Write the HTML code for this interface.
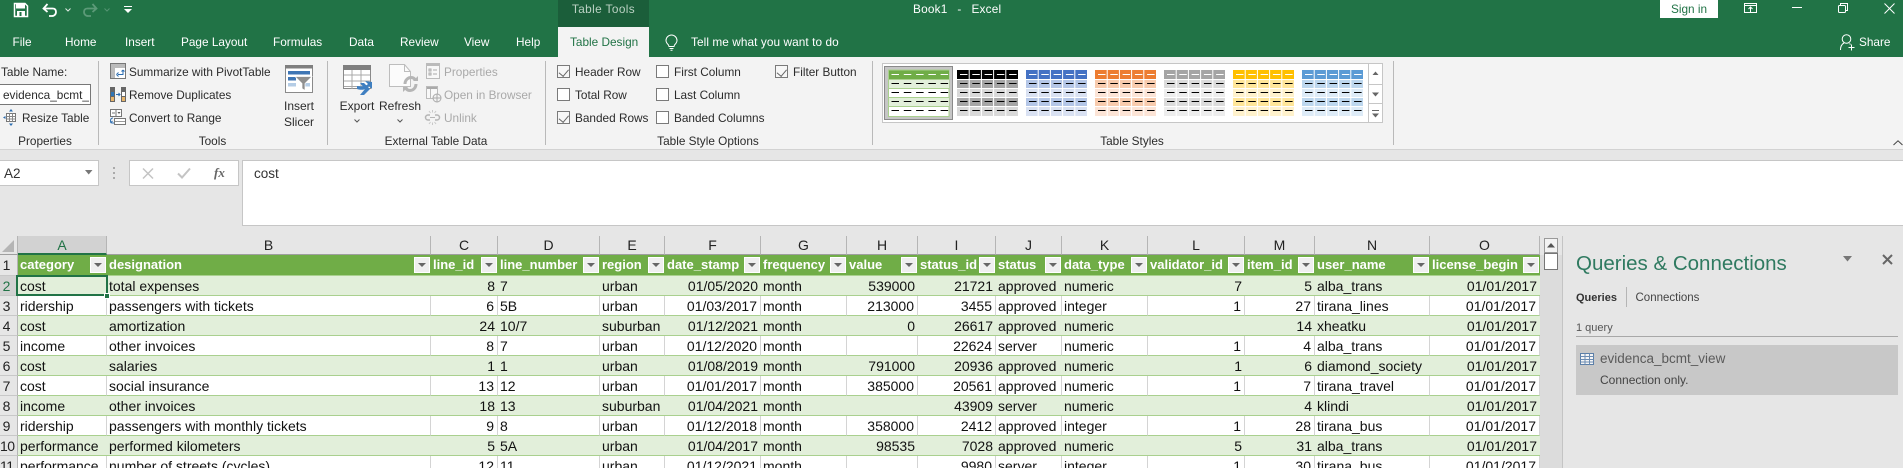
<!DOCTYPE html>
<html><head><meta charset="utf-8"><title>Book1 - Excel</title>
<style>
*{box-sizing:border-box}
html,body{margin:0;padding:0;width:1903px;height:468px;overflow:hidden;background:#e6e6e6;font-family:"Liberation Sans",sans-serif}
#r{position:relative;width:1903px;height:468px;overflow:hidden}
.a{position:absolute}
.t{position:absolute;white-space:nowrap;font-size:11.8px;line-height:14px;color:#2b2b2b}
.w{color:#fff}
.d{color:#a9a9a9}
.c{text-align:center}
svg{position:absolute;overflow:visible}
.sep{position:absolute;top:61px;width:1px;height:84px;background:#b9b9b9}
.cb{position:absolute;width:13px;height:13px;background:#fff;border:1px solid #7a7a7a}
.cb.k{background:#f7f7f7}
.cb.k:after{content:"";position:absolute;left:2.5px;top:1px;width:4.5px;height:7.5px;border:solid #666;border-width:0 1px 1px 0;transform:rotate(40deg)}
table{position:absolute;left:18px;top:255px;border-collapse:separate;border-spacing:0;table-layout:fixed;width:1522px;font-size:14px;color:#111}
td{padding:0 2px;height:20px;line-height:18px;white-space:nowrap;overflow:hidden;background:#fff;border-bottom:1px solid #a9d08e;border-right:1px solid #d4d4d4}
tr.b td{background:#e2efda;border-right:0}
td.r{text-align:right;padding-right:3px}
tr.h td{background:#70ad47;color:#fff;font-weight:bold;font-size:13px;height:21px;line-height:20px;border-right:0;position:relative}
tr.h td i{position:absolute;right:1.5px;top:2px;width:16px;height:16px;background:#efefef;border:1px solid #fff}
tr.h td i:after{content:"";position:absolute;left:3.5px;top:5px;border:4px solid transparent;border-top:4px solid #666;border-bottom:0}
.ch{position:absolute;top:236px;height:19px;background:#e6e6e6;border-right:1px solid #b5b5b5;border-bottom:1px solid #9e9e9e;text-align:center;font-size:14px;line-height:18px;color:#222}
.rh{position:absolute;left:0;width:18px;height:20px;border-right:1px solid #b5b5b5;border-bottom:1px solid #c8c8c8;font-size:14px;line-height:20px;color:#222;text-align:center;background:#e6e6e6;padding-right:4px}
</style></head><body><div id="r">

<!-- title bar -->
<div class="a" style="left:0;top:0;width:1903px;height:57px;background:#217346"></div>
<div class="a" style="left:558px;top:0;width:91px;height:27px;background:#1b5e3a"></div>
<div class="a" style="left:558px;top:27px;width:91px;height:30px;background:#f3f3f3"></div>
<svg style="left:13px;top:3px" width="16" height="14" viewBox="0 0 16 14"><path d="M1.5 .5h10.5l2.5 2.5v10.500h-13z" fill="none" stroke="#fff" stroke-width="1.500"/><rect x="3" y="1" width="9" height="4.500" fill="#fff"/><rect x="4" y="8" width="8" height="5" fill="#fff"/><rect x="6.500" y="9" width="2" height="4" fill="#217346"/></svg>
<svg style="left:42px;top:3px" width="16" height="14" viewBox="0 0 16 14"><path d="M2 5.500h8.500c2.500 0 3.500 1.500 3.500 3.500s-1.500 4-4 4H7M5.500 1 1.500 5.500 5.500 9" fill="none" stroke="#fff" stroke-width="1.800"/></svg>
<svg style="left:65px;top:8px" width="6" height="4" viewBox="0 0 6 4"><path d="M.5.500 3 3 5.500.5" fill="none" stroke="#dfe9e3" stroke-width="1"/></svg>
<svg style="left:82px;top:3px" width="16" height="14" viewBox="0 0 16 14"><path d="M14 5.500H5.500C3 5.500 2 7 2 9s1.500 4 4 4h3M10.500 1l4 4.500-4 3.500" fill="none" stroke="#5c9a78" stroke-width="1.800"/></svg>
<svg style="left:104px;top:8px" width="6" height="4" viewBox="0 0 6 4"><path d="M.5.500 3 3 5.500.5" fill="none" stroke="#559573" stroke-width="1"/></svg>
<svg style="left:124px;top:6px" width="8" height="8" viewBox="0 0 8 8"><path d="M0 .5h8" stroke="#fff"/><path d="M0 3h8L4 7z" fill="#fff"/></svg>

<div class="t c" style="left:558px;top:2px;width:91px;color:#bcd2c4;letter-spacing:.4px">Table Tools</div>
<div class="t w" style="left:913px;top:2px;letter-spacing:.2px;word-spacing:1.500px">Book1 &nbsp;-&nbsp; Excel</div>

<div class="a" style="left:1660px;top:0;width:58px;height:18px;background:#fff"></div>
<div class="t c" style="left:1660px;top:2px;width:58px;color:#217346">Sign in</div>
<svg style="left:1744px;top:3px" width="13" height="10" viewBox="0 0 13 10"><rect x=".5" y=".5" width="12" height="9" fill="none" stroke="#fff"/><path d="M.5 2.500h12" stroke="#fff"/><path d="M6.500 9V4.500M4.500 6l2-2 2 2" fill="none" stroke="#fff"/></svg>
<div class="a" style="left:1792px;top:7px;width:10px;height:1px;background:#fff"></div>
<svg style="left:1838px;top:3px" width="10" height="10" viewBox="0 0 10 10"><rect x=".5" y="2.500" width="7" height="7" rx="1" fill="none" stroke="#fff"/><path d="M2.500 2.500V.5h7v7H7.500" fill="none" stroke="#fff"/></svg>
<svg style="left:1884px;top:3px" width="11" height="11" viewBox="0 0 11 11"><path d="M.5.500 10.500 10.500M10.500.5.500 10.500" stroke="#fff"/></svg>

<div class="t w" style="left:12.500px;top:35px">File</div>
<div class="t w" style="left:65px;top:35px">Home</div>
<div class="t w" style="left:125px;top:35px">Insert</div>
<div class="t w" style="left:181px;top:35px">Page Layout</div>
<div class="t w" style="left:273px;top:35px">Formulas</div>
<div class="t w" style="left:349px;top:35px">Data</div>
<div class="t w" style="left:400px;top:35px">Review</div>
<div class="t w" style="left:464px;top:35px">View</div>
<div class="t w" style="left:516px;top:35px">Help</div>
<div class="t" style="left:570px;top:35px;color:#217346">Table Design</div>
<svg style="left:665px;top:34px" width="13" height="17" viewBox="0 0 13 17"><path d="M3.500 11C2 9.500 1 8.500 1 6.500a5.500 5.500 0 0 1 11 0c0 2-1 3-2.500 4.500L9 12.500H4zM4.500 14.500h4M5.500 16.300h2" fill="none" stroke="#fff"/></svg>
<div class="t w" style="left:691px;top:35px;letter-spacing:.08px">Tell me what you want to do</div>
<svg style="left:1840px;top:34px" width="15" height="17" viewBox="0 0 15 17"><circle cx="6.500" cy="5" r="4.300" fill="none" stroke="#fff"/><path d="M.5 16c0-3.500 1.500-6 3.500-7M9.500 9.500l1 1M8.500 13.500h6M11.500 10.500v6" fill="none" stroke="#fff"/></svg>
<div class="t w" style="left:1859px;top:35px">Share</div>

<!-- ribbon -->
<div class="a" style="left:0;top:57px;width:1903px;height:92px;background:#f3f3f3"></div>
<div class="a" style="left:0;top:149px;width:1903px;height:1px;background:#d2d2d2"></div>
<div class="sep" style="left:98px"></div>
<div class="sep" style="left:327px"></div>
<div class="sep" style="left:545px"></div>
<div class="sep" style="left:872px"></div>
<div class="sep" style="left:1393px"></div>
<svg style="left:1893px;top:140px" width="10" height="6" viewBox="0 0 10 6"><path d="M.5 5 5 .8 9.500 5" fill="none" stroke="#444"/></svg>

<div class="t" style="left:1px;top:65px">Table Name:</div>
<div class="a" style="left:0;top:84px;width:91px;height:21px;background:#fff;border:1px solid #777;border-left:0"></div>
<div class="t" style="left:3px;top:88px;width:86px;overflow:hidden">evidenca_bcmt_view</div>
<svg style="left:3px;top:109px" width="15" height="17" viewBox="0 0 15 17"><rect x="3.500" y="4.500" width="9" height="8" fill="#fff" stroke="#777"/><path d="M3.500 7.500h9M3.500 10h9M6.500 4.500v8M9.500 4.500v8" stroke="#888"/><path d="M8 0 6 2.500h4zM8 17l-2-2.500h4zM0 8.500 2.500 7v3z" fill="#2b6cb0"/></svg>
<div class="t" style="left:22px;top:111px">Resize Table</div>
<div class="t c" style="left:0;top:134px;width:90px">Properties</div>

<svg style="left:110px;top:63px" width="16" height="16" viewBox="0 0 16 16"><rect x=".5" y=".5" width="15" height="15" fill="#fff" stroke="#777"/><path d="M1 5h4v10H1zM1 1h4v4H1zM5 1h10v4H5z" fill="#bbb"/><path d="M8 11.500h5V7.500M6.500 11.500l2-2M6.500 11.500l2 2M13 7l-1.500 1.500M13 7l1.500 1.500" fill="none" stroke="#2b6cb0"/></svg>
<div class="t" style="left:129px;top:65px">Summarize with PivotTable</div>
<svg style="left:110px;top:87px" width="16" height="15" viewBox="0 0 16 15"><rect x="0" y="0" width="5" height="15" fill="#666"/><rect x="11" y="0" width="5" height="15" fill="#666"/><rect x="1" y="5" width="3" height="4" fill="#2f75b5"/><rect x="1" y="10" width="3" height="4" fill="#e7b56b"/><rect x="12" y="5" width="3" height="4" fill="#fff"/><rect x="12" y="10" width="3" height="4" fill="#e7b56b"/><path d="M6 7.500h4M8.500 6l1.500 1.500-1.500 1.500" fill="none" stroke="#2b6cb0"/></svg>
<div class="t" style="left:129px;top:88px">Remove Duplicates</div>
<svg style="left:110px;top:109px" width="16" height="17" viewBox="0 0 16 17"><rect x=".5" y=".5" width="11" height="7" fill="#fff" stroke="#777"/><path d="M6 1v6" stroke="#777"/><path d="M2 4h3" stroke="#777"/><path d="M7.500 3h3l-1.500 2z" fill="#555"/><rect x="4.500" y="9.500" width="11" height="6" fill="#fff" stroke="#777"/><path d="M5 12.500h10" stroke="#999"/><path d="M3 9C1 9 .5 10.500.5 12s1 2 2 2H4M2.500 12l-2 2" fill="none" stroke="#2b6cb0"/></svg>
<div class="t" style="left:129px;top:111px">Convert to Range</div>
<svg style="left:285px;top:65px" width="28" height="28" viewBox="0 0 28 28"><rect x=".5" y=".5" width="27" height="27" fill="#fff" stroke="#8a8a8a"/><rect x="0" y="0" width="28" height="3.500" fill="#7f7f7f"/><rect x="3" y="6" width="22" height="3.500" fill="#3f76b5"/><rect x="3" y="12" width="8" height="3.500" fill="#3f76b5"/><rect x="3" y="18" width="8" height="3.500" fill="#b5cde6"/><rect x="18" y="18" width="7" height="3.500" fill="#b5cde6"/><path d="M10 11.500h17l-7 7v7l-3-2v-5z" fill="#8f8f8f" stroke="#fff" stroke-width=".7"/></svg>
<div class="t c" style="left:279px;top:99px;width:40px;font-size:12px">Insert</div>
<div class="t c" style="left:279px;top:115px;width:40px;font-size:12px">Slicer</div>
<div class="t c" style="left:180px;top:134px;width:65px">Tools</div>

<svg style="left:343px;top:65px" width="30" height="31" viewBox="0 0 30 31"><rect x=".5" y=".5" width="27" height="23" fill="#fff" stroke="#8a8a8a"/><rect x="0" y="0" width="28" height="5" fill="#7f7f7f"/><path d="M1 10h26M1 16h26M1 21.500h26M9 5v19M18 5v19" stroke="#a8a8a8"/><path d="M14 21c6 1 9 0 11-2l-3-3 7 1v0l0 7-3-3c-2 3-6 5-12 3z" fill="#3f7fc1"/><path d="M17 18h4l6 6-6 6h-4l5-6z" fill="#3f7fc1"/></svg>
<svg style="left:389px;top:64px" width="30" height="32" viewBox="0 0 30 32"><path d="M.5.500h15l6 7v15h-21z" fill="#fbfbfb" stroke="#bdbdbd"/><path d="M15.500.5v7h6" fill="none" stroke="#bdbdbd"/><path d="M16 20c0-4 3-6.500 6-6.500 2 0 3 .5 4 2M27 20c0 4-3 6.500-6 6.500-2 0-3-.5-4-2" fill="none" stroke="#b5b5b5" stroke-width="3"/><path d="M24 17h5v-5zM19 23h-5v5z" fill="#b5b5b5"/></svg>
<div class="t c" style="left:337px;top:99px;width:40px;font-size:12px">Export</div>
<div class="t c" style="left:379px;top:99px;width:40px;font-size:12px">Refresh</div>
<svg style="left:354px;top:119px" width="6" height="4" viewBox="0 0 6 4"><path d="M.5.500 3 3 5.500.5" fill="none" stroke="#555"/></svg>
<svg style="left:397px;top:119px" width="6" height="4" viewBox="0 0 6 4"><path d="M.5.500 3 3 5.500.5" fill="none" stroke="#555"/></svg>

<svg style="left:426px;top:63px" width="14" height="16" viewBox="0 0 14 16"><rect x=".5" y=".5" width="13" height="15" fill="#f8f8f8" stroke="#bbb"/><path d="M1 2h12" stroke="#bbb" stroke-width="2"/><path d="M3 6h2v2H3zM3 10h2v2H3zM7 7h4M7 11h4" fill="none" stroke="#aaa"/></svg>
<div class="t d" style="left:444px;top:65px">Properties</div>
<svg style="left:426px;top:86px" width="16" height="17" viewBox="0 0 16 17"><rect x=".5" y=".5" width="11" height="12" fill="#f8f8f8" stroke="#bbb"/><path d="M1 2h10" stroke="#aaa" stroke-width="2"/><path d="M4.500 3v9" stroke="#bbb"/><circle cx="11" cy="12" r="4" fill="#f3f3f3" stroke="#aaa"/><path d="M7 12h8M11 8v8" stroke="#aaa"/></svg>
<div class="t d" style="left:444px;top:88px">Open in Browser</div>
<svg style="left:425px;top:110px" width="15" height="15" viewBox="0 0 15 15"><path d="M5 5H3a2.500 2.500 0 0 0 0 5h2M10 5h2a2.500 2.500 0 0 1 0 5h-2" fill="none" stroke="#b5b5b5" stroke-width="1.500"/><path d="M5 7.500h5" stroke="#b5b5b5"/><path d="M4 1l1.500 2M7.500 0v2.500M11 1 9.500 3M4 14l1.500-2M7.500 15v-2.500M11 14l-1.500-2" stroke="#c8c8c8"/></svg>
<div class="t d" style="left:444px;top:111px">Unlink</div>
<div class="t c" style="left:330px;top:134px;width:212px">External Table Data</div>

<div class="cb k" style="left:557px;top:65px"></div><div class="t" style="left:575px;top:65px">Header Row</div>
<div class="cb" style="left:557px;top:88px"></div><div class="t" style="left:575px;top:88px">Total Row</div>
<div class="cb k" style="left:557px;top:111px"></div><div class="t" style="left:575px;top:111px">Banded Rows</div>
<div class="cb" style="left:656px;top:65px"></div><div class="t" style="left:674px;top:65px">First Column</div>
<div class="cb" style="left:656px;top:88px"></div><div class="t" style="left:674px;top:88px">Last Column</div>
<div class="cb" style="left:656px;top:111px"></div><div class="t" style="left:674px;top:111px">Banded Columns</div>
<div class="cb k" style="left:775px;top:65px"></div><div class="t" style="left:793px;top:65px">Filter Button</div>
<div class="t c" style="left:650px;top:134px;width:116px">Table Style Options</div>

<!-- gallery -->
<div class="a" style="left:882px;top:63px;width:501px;height:60px;background:#fff;border:1px solid #c6c6c6"></div>
<div class="a" style="left:884px;top:66px;width:69px;height:54px;background:#c6c6c6;border:1.500px solid #8a8a8a"></div>
<svg style="left:0;top:0" width="1903" height="468">
<defs>
<g id="ov"><path d="M12.200 0v46M24.400 0v46M36.600 0v46M48.800 0v46" stroke="#fff" stroke-width="1"/><path d="M0 9.500h61M0 18.500h61M0 27.500h61M0 36.500h61" stroke="#fff"/>
<path d="M3 13.500h7.500M15.300 13.500h7.500M27.600 13.500h7.500M39.900 13.500h7.500M52.100 13.500h7.500M3 22.500h7.500M15.300 22.500h7.500M27.600 22.500h7.500M39.900 22.500h7.500M52.100 22.500h7.500M3 31.500h7.500M15.300 31.500h7.500M27.600 31.500h7.500M39.900 31.500h7.500M52.100 31.500h7.500M3 40.500h7.500M15.300 40.500h7.500M27.600 40.500h7.500M39.900 40.500h7.500M52.100 40.500h7.500" stroke="#000"/>
<path d="M3 4.500h7.500M15.300 4.500h7.500M27.600 4.500h7.500M39.900 4.500h7.500M52.100 4.500h7.500" stroke="#fff"/></g>
</defs>
<!-- first thumb -->
<g transform="translate(888.500 70)"><rect width="60.500" height="46.500" fill="#fff" stroke="#a9d08e"/><rect x=".5" y=".5" width="60" height="9" fill="#70ad47"/><rect x=".5" y="10" width="60" height="8.500" fill="#e2efda"/><rect x=".5" y="28" width="60" height="8.500" fill="#e2efda"/><path d="M0 9.500h61M0 18.500h61M0 27.500h61M0 36.500h61" stroke="#a9d08e"/>
<path d="M3 4.500h7.500M15.300 4.500h7.500M27.600 4.500h7.500M39.900 4.500h7.500M52.100 4.500h7.500" stroke="#fff"/><path d="M3 13.500h7.500M15.300 13.500h7.500M27.600 13.500h7.500M39.900 13.500h7.500M52.100 13.500h7.500M3 22.500h7.500M15.300 22.500h7.500M27.600 22.500h7.500M39.900 22.500h7.500M52.100 22.500h7.500M3 31.500h7.500M15.300 31.500h7.500M27.600 31.500h7.500M39.900 31.500h7.500M52.100 31.500h7.500M3 40.500h7.500M15.300 40.500h7.500M27.600 40.500h7.500M39.900 40.500h7.500M52.100 40.500h7.500" stroke="#000"/></g>
<g transform="translate(957 70)"><rect width="61" height="9.500" fill="#000"/><rect y="9.500" width="61" height="9" fill="#a6a6a6"/><rect y="18.500" width="61" height="9" fill="#d9d9d9"/><rect y="27.500" width="61" height="9" fill="#a6a6a6"/><rect y="36.500" width="61" height="9.500" fill="#d9d9d9"/><use href="#ov"/></g>
<g transform="translate(1026 70)"><rect width="61" height="9.500" fill="#4472c4"/><rect y="9.500" width="61" height="9" fill="#b4c6e7"/><rect y="18.500" width="61" height="9" fill="#d9e1f2"/><rect y="27.500" width="61" height="9" fill="#b4c6e7"/><rect y="36.500" width="61" height="9.500" fill="#d9e1f2"/><use href="#ov"/></g>
<g transform="translate(1095 70)"><rect width="61" height="9.500" fill="#ed7d31"/><rect y="9.500" width="61" height="9" fill="#f8cbad"/><rect y="18.500" width="61" height="9" fill="#fce4d6"/><rect y="27.500" width="61" height="9" fill="#f8cbad"/><rect y="36.500" width="61" height="9.500" fill="#fce4d6"/><use href="#ov"/></g>
<g transform="translate(1164 70)"><rect width="61" height="9.500" fill="#a5a5a5"/><rect y="9.500" width="61" height="9" fill="#dbdbdb"/><rect y="18.500" width="61" height="9" fill="#ededed"/><rect y="27.500" width="61" height="9" fill="#dbdbdb"/><rect y="36.500" width="61" height="9.500" fill="#ededed"/><use href="#ov"/></g>
<g transform="translate(1233 70)"><rect width="61" height="9.500" fill="#ffc000"/><rect y="9.500" width="61" height="9" fill="#ffe699"/><rect y="18.500" width="61" height="9" fill="#fff2cc"/><rect y="27.500" width="61" height="9" fill="#ffe699"/><rect y="36.500" width="61" height="9.500" fill="#fff2cc"/><use href="#ov"/></g>
<g transform="translate(1302 70)"><rect width="61" height="9.500" fill="#5b9bd5"/><rect y="9.500" width="61" height="9" fill="#bdd7ee"/><rect y="18.500" width="61" height="9" fill="#ddebf7"/><rect y="27.500" width="61" height="9" fill="#bdd7ee"/><rect y="36.500" width="61" height="9.500" fill="#ddebf7"/><use href="#ov"/></g>
<!-- scroller -->
<path d="M1368.500 63v60M1368 84.500h15M1368 103.500h15" stroke="#c6c6c6"/>
<path d="M1375.500 71.500l-3 3.500h6z" fill="#666"/><path d="M1372 92.500h7l-3.500 4z" fill="#666"/><path d="M1372 110.500h7" stroke="#666"/><path d="M1372 113.500h7l-3.500 4z" fill="#666"/>
</svg>
<div class="t c" style="left:1090px;top:134px;width:84px">Table Styles</div>

<!-- formula bar -->
<div class="a" style="left:0;top:160px;width:99px;height:26px;background:#fff;border:1px solid #c6c6c6;border-left:0"></div>
<div class="t" style="left:4px;top:167px;font-size:13.500px;color:#333">A2</div>
<svg style="left:85px;top:170px" width="8" height="5" viewBox="0 0 8 5"><path d="M0 0h7.500L3.700 4.500z" fill="#777"/></svg>
<div class="a" style="left:113px;top:167px;width:2px;height:2px;background:#aaa;box-shadow:0 5px #aaa,0 10px #aaa"></div>
<div class="a" style="left:129px;top:160px;width:110px;height:26px;background:#fff;border:1px solid #c6c6c6"></div>
<svg style="left:142px;top:168px" width="12" height="11" viewBox="0 0 12 11"><path d="M1 .5 11 10.500M11 .5 1 10.500" stroke="#c4c4c4" stroke-width="1.500"/></svg>
<svg style="left:177px;top:168px" width="14" height="11" viewBox="0 0 14 11"><path d="M1 5.500l4 4 8-9" fill="none" stroke="#c4c4c4" stroke-width="2"/></svg>
<div class="t" style="left:214px;top:166px;font:italic bold 13px/14px 'Liberation Serif',serif;color:#666">fx</div>
<div class="a" style="left:242px;top:160px;width:1661px;height:66px;background:#fff;border:1px solid #c6c6c6;border-right:0"></div>
<div class="t" style="left:254px;top:167px;font-size:13.500px;color:#333">cost</div>

<!-- grid -->
<div class="a" style="left:0;top:236px;width:18px;height:19px;border-right:1px solid #b5b5b5;border-bottom:1px solid #9e9e9e"></div>
<svg style="left:2px;top:240px" width="13" height="12" viewBox="0 0 13 12"><path d="M12 0v12H0z" fill="#b5b5b5"/></svg>
<div class="ch" style="left:18px;width:89px;background:#d2d2d2;border-bottom:2px solid #217346;color:#217346">A</div>
<div class="ch" style="left:107px;width:324px">B</div>
<div class="ch" style="left:431px;width:67px">C</div>
<div class="ch" style="left:498px;width:102px">D</div>
<div class="ch" style="left:600px;width:65px">E</div>
<div class="ch" style="left:665px;width:96px">F</div>
<div class="ch" style="left:761px;width:86px">G</div>
<div class="ch" style="left:847px;width:71px">H</div>
<div class="ch" style="left:918px;width:78px">I</div>
<div class="ch" style="left:996px;width:66px">J</div>
<div class="ch" style="left:1062px;width:86px">K</div>
<div class="ch" style="left:1148px;width:97px">L</div>
<div class="ch" style="left:1245px;width:70px">M</div>
<div class="ch" style="left:1315px;width:115px">N</div>
<div class="ch" style="left:1430px;width:110px">O</div>

<div class="rh" style="top:255px;height:21px">1</div>
<div class="rh" style="top:276px;background:#d2d2d2;color:#217346">2</div>
<div class="rh" style="top:296px">3</div>
<div class="rh" style="top:316px">4</div>
<div class="rh" style="top:336px">5</div>
<div class="rh" style="top:356px">6</div>
<div class="rh" style="top:376px">7</div>
<div class="rh" style="top:396px">8</div>
<div class="rh" style="top:416px">9</div>
<div class="rh" style="top:436px;padding:0;text-align:left;letter-spacing:-.5px">10</div>
<div class="rh" style="top:456px;padding:0;text-align:left;letter-spacing:-.5px">11</div>

<table>
<colgroup><col style="width:89px"><col style="width:324px"><col style="width:67px"><col style="width:102px"><col style="width:65px"><col style="width:96px"><col style="width:86px"><col style="width:71px"><col style="width:78px"><col style="width:66px"><col style="width:86px"><col style="width:97px"><col style="width:70px"><col style="width:115px"><col style="width:110px"></colgroup>
<tr class="h"><td>category<i></i></td><td>designation<i></i></td><td>line_id<i></i></td><td>line_number<i></i></td><td>region<i></i></td><td>date_stamp<i></i></td><td>frequency<i></i></td><td>value<i></i></td><td>status_id<i></i></td><td>status<i></i></td><td>data_type<i></i></td><td>validator_id<i></i></td><td>item_id<i></i></td><td>user_name<i></i></td><td>license_begin<i></i></td></tr>
<tr class="b"><td>cost</td><td>total expenses</td><td class="r">8</td><td>7</td><td>urban</td><td class="r">01/05/2020</td><td>month</td><td class="r">539000</td><td class="r">21721</td><td>approved</td><td>numeric</td><td class="r">7</td><td class="r">5</td><td>alba_trans</td><td class="r">01/01/2017</td></tr>
<tr><td>ridership</td><td>passengers with tickets</td><td class="r">6</td><td>5B</td><td>urban</td><td class="r">01/03/2017</td><td>month</td><td class="r">213000</td><td class="r">3455</td><td>approved</td><td>integer</td><td class="r">1</td><td class="r">27</td><td>tirana_lines</td><td class="r">01/01/2017</td></tr>
<tr class="b"><td>cost</td><td>amortization</td><td class="r">24</td><td>10/7</td><td>suburban</td><td class="r">01/12/2021</td><td>month</td><td class="r">0</td><td class="r">26617</td><td>approved</td><td>numeric</td><td class="r"></td><td class="r">14</td><td>xheatku</td><td class="r">01/01/2017</td></tr>
<tr><td>income</td><td>other invoices</td><td class="r">8</td><td>7</td><td>urban</td><td class="r">01/12/2020</td><td>month</td><td class="r"></td><td class="r">22624</td><td>server</td><td>numeric</td><td class="r">1</td><td class="r">4</td><td>alba_trans</td><td class="r">01/01/2017</td></tr>
<tr class="b"><td>cost</td><td>salaries</td><td class="r">1</td><td>1</td><td>urban</td><td class="r">01/08/2019</td><td>month</td><td class="r">791000</td><td class="r">20936</td><td>approved</td><td>numeric</td><td class="r">1</td><td class="r">6</td><td>diamond_society</td><td class="r">01/01/2017</td></tr>
<tr><td>cost</td><td>social insurance</td><td class="r">13</td><td>12</td><td>urban</td><td class="r">01/01/2017</td><td>month</td><td class="r">385000</td><td class="r">20561</td><td>approved</td><td>numeric</td><td class="r">1</td><td class="r">7</td><td>tirana_travel</td><td class="r">01/01/2017</td></tr>
<tr class="b"><td>income</td><td>other invoices</td><td class="r">18</td><td>13</td><td>suburban</td><td class="r">01/04/2021</td><td>month</td><td class="r"></td><td class="r">43909</td><td>server</td><td>numeric</td><td class="r"></td><td class="r">4</td><td>klindi</td><td class="r">01/01/2017</td></tr>
<tr><td>ridership</td><td>passengers with monthly tickets</td><td class="r">9</td><td>8</td><td>urban</td><td class="r">01/12/2018</td><td>month</td><td class="r">358000</td><td class="r">2412</td><td>approved</td><td>integer</td><td class="r">1</td><td class="r">28</td><td>tirana_bus</td><td class="r">01/01/2017</td></tr>
<tr class="b"><td>performance</td><td>performed kilometers</td><td class="r">5</td><td>5A</td><td>urban</td><td class="r">01/04/2017</td><td>month</td><td class="r">98535</td><td class="r">7028</td><td>approved</td><td>numeric</td><td class="r">5</td><td class="r">31</td><td>alba_trans</td><td class="r">01/01/2017</td></tr>
<tr><td>performance</td><td>number of streets (cycles)</td><td class="r">12</td><td>11</td><td>urban</td><td class="r">01/12/2021</td><td>month</td><td class="r"></td><td class="r">9980</td><td>server</td><td>integer</td><td class="r">1</td><td class="r">30</td><td>tirana_bus</td><td class="r">01/01/2017</td></tr>
</table>
<div class="a" style="left:16px;top:275px;width:92px;height:21px;border:2px solid #217346"></div>
<div class="a" style="left:104px;top:293px;width:6px;height:6px;background:#217346;border:1px solid #fff"></div>

<!-- scrollbar -->
<div class="a" style="left:1540px;top:236px;width:22px;height:232px;background:#dcdcdc"></div>
<div class="a" style="left:1540px;top:236px;width:22px;height:19px;background:#e6e6e6"></div>
<div class="a" style="left:1544px;top:238px;width:14px;height:15px;background:#f3f3f3;border:1px solid #9a9a9a"></div>
<svg style="left:1547px;top:243px" width="8" height="5" viewBox="0 0 8 5"><path d="M4 0 0 4.500h8z" fill="#555"/></svg>
<div class="a" style="left:1544px;top:253px;width:14px;height:17px;background:#fff;border:1px solid #777"></div>

<!-- pane -->
<div class="a" style="left:1562px;top:236px;width:341px;height:232px;background:#e6e6e6;border-left:1px solid #c4c4c4"></div>
<div class="t" style="left:1576px;top:251px;font-size:20.500px;line-height:26px;color:#2f7a60">Queries &amp; Connections</div>
<svg style="left:1843px;top:256px" width="9" height="6" viewBox="0 0 9 6"><path d="M0 0h9L4.500 5.500z" fill="#777"/></svg>
<svg style="left:1882px;top:254px" width="11" height="11" viewBox="0 0 11 11"><path d="M1 1l9 9M10 1l-9 9" stroke="#666" stroke-width="2"/></svg>
<div class="t" style="left:1576px;top:291px;font-weight:bold;font-size:11px;color:#333">Queries</div>
<div class="a" style="left:1626px;top:287px;width:1px;height:20px;background:#b5b5b5"></div>
<div class="t" style="left:1635.500px;top:291px;font-size:11.500px;color:#444">Connections</div>
<div class="t" style="left:1576px;top:321px;font-size:11px;color:#555">1 query</div>
<div class="a" style="left:1576px;top:336px;width:322px;height:1px;background:#a8a8a8"></div>
<div class="a" style="left:1576px;top:345px;width:322px;height:50px;background:#c8c8c8"></div>
<svg style="left:1580px;top:353px" width="14" height="12" viewBox="0 0 14 12"><rect x=".5" y=".5" width="13" height="11" fill="#f5f5f5" stroke="#5b7fa8"/><path d="M.5 3.500h13M.5 6.500h13M.5 9h13M5 .5v11M9.500 .5v11" stroke="#6d8db3"/></svg>
<div class="t" style="left:1600px;top:352px;font-size:13.500px;color:#5a5a5a">evidenca_bcmt_view</div>
<div class="t" style="left:1600px;top:373px;font-size:12px;color:#444">Connection only.</div>

</div></body></html>
